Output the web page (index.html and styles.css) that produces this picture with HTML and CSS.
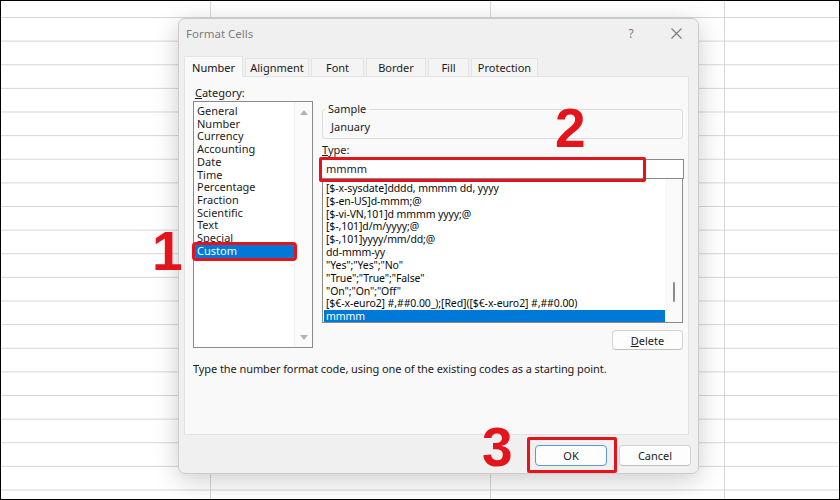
FILE: index.html
```html
<!DOCTYPE html>
<html lang="en">
  <head>
    <meta charset="UTF-8" />
    <meta name="viewport" content="width=device-width, initial-scale=1.0" />
    <title>Format Cells</title>
    <link rel="stylesheet" href="styles.css">
  </head>
  <body>
    <div class="sheet">
      <div class="dialog">
        <div class="titlebar">
          <span class="title">Format Cells</span>
          <div class="title-btns">
            <span class="help">?</span>
            <span class="close">
              <svg width="11" height="11" viewBox="0 0 11 11"><path d="M0.5 0.5L10.5 10.5M10.5 0.5L0.5 10.5" stroke="#7a7a7a" stroke-width="1.1" fill="none"/></svg>
            </span>
          </div>
        </div>
        <div class="tabs">
          <span class="tab tab-number active">Number</span>
          <span class="tab tab-alignment">Alignment</span>
          <span class="tab tab-font">Font</span>
          <span class="tab tab-border">Border</span>
          <span class="tab tab-fill">Fill</span>
          <span class="tab tab-protection">Protection</span>
        </div>
        <div class="panel">
          <div class="panel-cols">
            <div class="cat-col">
              <div class="field-label"><u>C</u>ategory:</div>
              <div class="cat-list">
                <ul class="items">
                  <li>General</li>
                  <li>Number</li>
                  <li>Currency</li>
                  <li>Accounting</li>
                  <li>Date</li>
                  <li>Time</li>
                  <li>Percentage</li>
                  <li>Fraction</li>
                  <li>Scientific</li>
                  <li>Text</li>
                  <li>Special</li>
                  <li class="selected marked">Custom</li>
                </ul>
                <div class="vscroll">
                  <span class="arrow up"></span>
                  <span class="arrow down"></span>
                </div>
              </div>
            </div>
            <div class="type-col">
              <fieldset class="sample">
                <legend>Sample</legend>
                <div class="sample-value">January</div>
              </fieldset>
              <div class="field-label"><u>T</u>ype:</div>
              <div class="type-input">mmmm</div>
              <div class="fmt-list">
                <ul class="items">
                  <li>[$-x-sysdate]dddd, mmmm dd, yyyy</li>
                  <li>[$-en-US]d-mmm;@</li>
                  <li>[$-vi-VN,101]d mmmm yyyy;@</li>
                  <li>[$-,101]d/m/yyyy;@</li>
                  <li>[$-,101]yyyy/mm/dd;@</li>
                  <li>dd-mmm-yy</li>
                  <li>"Yes";"Yes";"No"</li>
                  <li>"True";"True";"False"</li>
                  <li>"On";"On";"Off"</li>
                  <li>[$€-x-euro2] #,##0.00_);[Red]([$€-x-euro2] #,##0.00)</li>
                  <li class="selected">mmmm</li>
                </ul>
                <div class="thin-scroll"><span class="thumb"></span></div>
              </div>
              <div class="delete-row">
                <button class="btn btn-delete"><u>D</u>elete</button>
              </div>
            </div>
          </div>
          <p class="hint">Type the number format code, using one of the existing codes as a starting point.</p>
        </div>
        <div class="footer">
          <button class="btn btn-ok">OK</button>
          <button class="btn">Cancel</button>
        </div>
      </div>

      <!-- tutorial annotations -->
      <div class="mark mark-type"></div>
      <div class="mark mark-ok"></div>
      <span class="step step-1">1</span>
      <span class="step step-2">2</span>
      <span class="step step-3">3</span>
    </div>
  </body>
</html>
```

FILE: styles.css
```css
* {
  box-sizing: border-box;
}
body {
  margin: 0;
  font-family: "Noto Sans", "Segoe UI", sans-serif;
  font-size: 11px;
  color: #1b1b1b;
}
.sheet {
  position: relative;
  width: 840px;
  height: 500px;
  overflow: hidden;
  background-color: #fff;
  background-image:
    linear-gradient(to right, #d6d6d6 1px, transparent 1px),
    linear-gradient(to right, #d6d6d6 1px, transparent 1px),
    linear-gradient(to right, #d6d6d6 1px, transparent 1px),
    linear-gradient(to bottom, #d6d6d6 1px, transparent 1px);
  background-size: 1px 100%, 1px 100%, 1px 100%, 100% 23.635px;
  background-position: 210px 0, 490px 0, 724px 0, 0 17px;
  background-repeat: no-repeat, no-repeat, no-repeat, repeat-y;
  box-shadow: inset 0 0 0 1px #000;
}

/* dialog window */
.dialog {
  position: absolute;
  left: 178px;
  top: 18px;
  width: 521px;
  height: 456px;
  padding: 0 9px 0 5px;
  display: flex;
  flex-direction: column;
  background-color: #f0f0f0;
  border: 1px solid #cbcbcb;
  border-radius: 7px;
  box-shadow: 0 6px 26px rgba(0, 0, 0, 0.2);
}
.titlebar {
  height: 37px;
  padding-bottom: 9px;
  display: flex;
  justify-content: space-between;
  align-items: center;
}
.title {
  margin-left: 2px;
  font-size: 11.5px;
  color: #7d7d7d;
}
.title-btns {
  display: flex;
  align-items: center;
  gap: 19px;
}
.title-btns span {
  width: 26px;
  display: flex;
  justify-content: center;
  align-items: center;
}
.help {
  font-size: 12px;
  color: #7a7a7a;
}

/* tabs */
.tabs {
  display: flex;
  align-items: flex-end;
  gap: 2px;
  height: 20px;
}
.tab {
  height: 18px;
  display: flex;
  justify-content: center;
  align-items: center;
  background-color: #f4f4f4;
  border: 1px solid #e4e4e4;
  border-bottom: none;
}
.tab.active {
  position: relative;
  z-index: 1;
  height: 21px;
  margin-bottom: -1px;
  background-color: #f9f9f9;
  color: #111;
}
.tab-number { width: 59px; }
.tab-alignment { width: 64px; }
.tab-font { width: 53px; }
.tab-border { width: 60px; }
.tab-fill { width: 41px; }
.tab-protection { width: 67px; }

/* tab page */
.panel {
  height: 359px;
  padding-top: 9px;
  background-color: #f9f9f9;
  border: 1px solid #e2e2e2;
}
.panel-cols {
  display: flex;
  gap: 8px;
  padding-left: 8px;
}
.field-label {
  line-height: 14px;
  margin-left: 2px;
}
.cat-col {
  width: 120px;
}
.cat-list {
  display: flex;
  height: 247px;
  margin-top: 1px;
  background-color: #fff;
  border: 1px solid #8a8a8a;
}
.items {
  list-style: none;
  margin: 0;
  padding: 0;
  flex: 1;
}
.cat-list .items {
  padding-top: 3px;
}
.cat-list .items li {
  height: 12.73px;
  line-height: 12.73px;
  margin-left: 1px;
  padding-left: 2px;
  white-space: nowrap;
}
.items li.selected {
  background-color: #0078d7;
  color: #fff;
}
.items li.marked {
  position: relative;
  z-index: 2;
  outline: 3px solid #e3141b;
  border-radius: 1px;
}
.vscroll {
  width: 18px;
  position: relative;
  background-color: #fbfbfb;
  border-left: 1px solid #f0f0f0;
}
.arrow {
  position: absolute;
  left: 5px;
  width: 0;
  height: 0;
  border-left: 4px solid transparent;
  border-right: 4px solid transparent;
}
.arrow.up {
  top: 8px;
  border-bottom: 5px solid #b4b4b4;
}
.arrow.down {
  bottom: 7px;
  border-top: 5px solid #b4b4b4;
}

.type-col {
  width: 363px;
  padding-top: 16px;
}
.sample {
  margin: 0 1px;
  padding: 0 0 4px 2px;
  border: 1px solid #dcdcdc;
  border-radius: 3px;
}
.sample legend {
  padding: 0 3px;
  line-height: 14px;
}
.sample-value {
  margin: 4px 0 0 6px;
  line-height: 14px;
}
.type-col .field-label {
  margin-top: 4px;
  margin-left: 1px;
}
.type-input {
  height: 20px;
  margin: 2px 0 0;
  padding-left: 4px;
  line-height: 18px;
  background-color: #fff;
  border: 1px solid #8a8a8a;
}
.fmt-list {
  display: flex;
  height: 145px;
  margin: -1px 1px 0;
  background-color: #fff;
  border: 1px solid #8a8a8a;
  overflow: hidden;
}
.fmt-list .items {
  padding-top: 3px;
}
.fmt-list .items li {
  height: 12.84px;
  line-height: 12.84px;
  margin-left: 1px;
  padding-left: 2px;
  font-size: 10.5px;
  letter-spacing: -0.1px;
  white-space: nowrap;
  color: #0a0a0a;
}
.fmt-list .items li.selected {
  color: #fff;
}
.thin-scroll {
  width: 17px;
  position: relative;
  background-color: #fafafa;
}
.thumb {
  position: absolute;
  left: 8px;
  top: 103px;
  width: 2px;
  height: 20px;
  border-radius: 1px;
  background-color: #8a8a8a;
}
.delete-row {
  display: flex;
  justify-content: flex-end;
  margin-top: 7px;
  padding-right: 1px;
}

/* buttons */
.btn {
  height: 21px;
  width: 72px;
  padding: 0;
  font-family: inherit;
  font-size: 11px;
  color: #1b1b1b;
  background-color: #fdfdfd;
  border: 1px solid #d3d3d3;
  border-bottom-color: #c0c0c0;
  border-radius: 4px;
}
.btn-delete {
  width: 71px;
  height: 20px;
}
.btn-ok {
  border-color: #5b9ad8;
}
.hint {
  margin: 12px 0 0 8px;
  line-height: 14px;
  letter-spacing: -0.08px;
}
.footer {
  display: flex;
  justify-content: flex-end;
  gap: 12px;
  margin-top: 10px;
  margin-right: -2px;
}

/* red tutorial marks */
.mark {
  position: absolute;
  border: 3px solid #e3141b;
  border-radius: 2px;
}
.mark-type {
  left: 319px;
  top: 157px;
  width: 327px;
  height: 25px;
}
.mark-ok {
  left: 527px;
  top: 437px;
  width: 90px;
  height: 36px;
}
.step {
  position: absolute;
  font-family: "Liberation Sans", Arial, sans-serif;
  font-weight: bold;
  font-size: 55px;
  line-height: 55px;
  color: #e3141b;
}
.step-1 {
  left: 152px;
  top: 224px;
}
.step-2 {
  left: 555px;
  top: 101px;
}
.step-3 {
  left: 482px;
  top: 420px;
}
```
